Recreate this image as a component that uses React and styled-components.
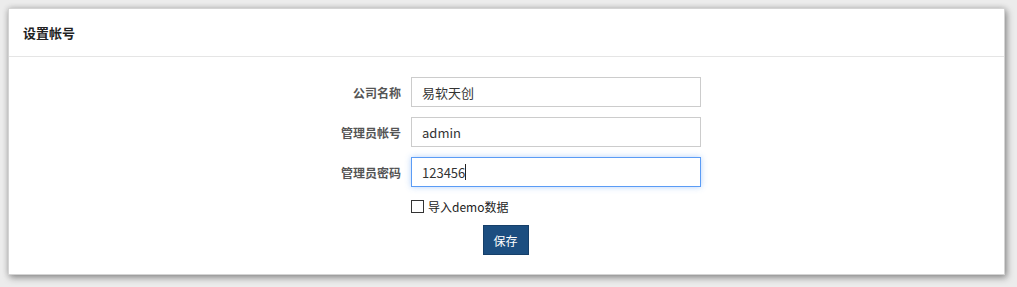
import React from "react";
import styled, { createGlobalStyle } from "styled-components";

const Global = createGlobalStyle`
  html, body { margin: 0; padding: 0; }
  body {
    background: #ececec;
    font-family: "Noto Sans CJK SC", "Noto Sans", sans-serif;
    font-size: 12px;
    color: #333;
  }
`;

const Page = styled.div`
  padding: 8px 12px 12px 8px;
`;

const Panel = styled.div`
  width: 997px;
  box-sizing: border-box;
  background: #fff;
  border: 1px solid #d4d4d4;
  box-shadow: 0 0 6px rgba(0,0,0,0.18), 2px 3px 7px rgba(0,0,0,0.35);
`;

const Header = styled.div`
  height: 47px;
  border-bottom: 1px solid #e5e5e5;
  display: flex;
  align-items: center;
  padding-left: 14px;
`;

const Title = styled.h3`
  margin: 0;
  font-size: 13px;
  font-weight: bold;
  color: #222;
`;

const Body = styled.div`
  padding: 20px 0 19px 0;
`;

const Form = styled.div`
  display: grid;
  grid-template-columns: 100px 290px;
  column-gap: 10px;
  row-gap: 10px;
  padding-left: 292px;
  align-items: center;
`;

const Label = styled.label`
  text-align: right;
  font-size: 12px;
  font-weight: bold;
  color: #555;
`;

const Input = styled.input`
  box-sizing: border-box;
  width: 290px;
  height: 30px;
  padding: 0 10px;
  border: 1px solid #ccc;
  outline: none;
  font-family: "Noto Sans CJK SC", "Noto Sans", sans-serif;
  font-size: 13px;
  color: #333;
  background: #fff;
`;

const Caret = styled.span`
  display: inline-block;
  width: 1px;
  height: 16px;
  background: #222;
  vertical-align: middle;
`;

const FocusedInput = styled.div`
  box-sizing: border-box;
  width: 290px;
  height: 30px;
  padding: 0 10px;
  border: 1px solid #5b9cf5;
  box-shadow: 0 0 6px rgba(91,156,245,0.45);
  display: flex;
  align-items: center;
  font-size: 13px;
  color: #333;
`;

const CheckRow = styled.label`
  grid-column: 2;
  display: flex;
  align-items: center;
  gap: 2px;
  height: 18px;
  font-size: 12px;
  color: #222;
`;

const Box = styled.span`
  width: 11px;
  height: 11px;
  border: 1px solid #333;
  background: #fff;
  margin-right: 2px;
`;

const Actions = styled.div`
  display: flex;
  justify-content: center;
  margin-top: 10px;
`;

const Button = styled.button`
  width: 46px;
  height: 30px;
  background: #1c4e80;
  border: 1px solid #163f69;
  color: #fff;
  font-family: "Noto Sans CJK SC", "Noto Sans", sans-serif;
  font-size: 12px;
  padding: 0;
  margin-left: -2px;
`;

export default function App() {
  return (
    <>
      <Global />
      <Page>
        <Panel>
          <Header>
            <Title>设置帐号</Title>
          </Header>
          <Body>
            <Form>
              <Label>公司名称</Label>
              <Input defaultValue="易软天创" />
              <Label>管理员帐号</Label>
              <Input defaultValue="admin" />
              <Label>管理员密码</Label>
              <FocusedInput>123456<Caret /></FocusedInput>
              <CheckRow>
                <Box />
                导入demo数据
              </CheckRow>
            </Form>
            <Actions>
              <Button>保存</Button>
            </Actions>
          </Body>
        </Panel>
      </Page>
    </>
  );
}
